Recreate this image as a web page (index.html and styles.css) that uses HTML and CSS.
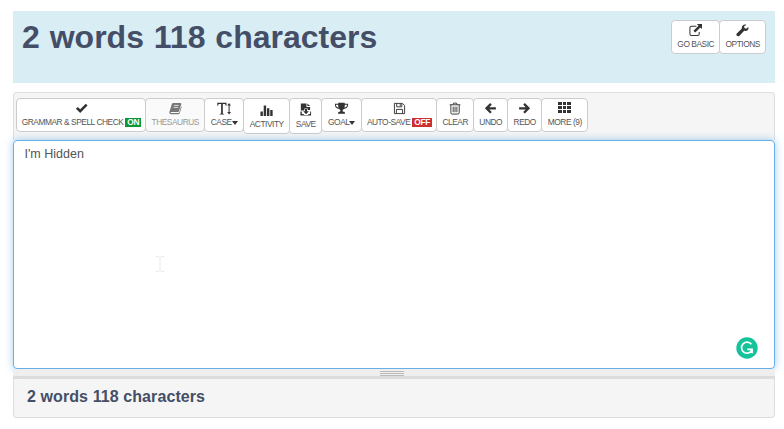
FILE: index.html
```html
<!DOCTYPE html>
<html lang="en">
<head>
<meta charset="utf-8">
<title>Word Counter</title>
<link rel="stylesheet" href="styles.css">
</head>
<body>
<header class="summary">
  <h1>2 words 118 characters</h1>
  <div class="group">
    <button class="btn basic"><svg class="icon" viewBox="0 0 14 14"><path d="M8 2.5H2.7Q1 2.5 1 4v6.7Q1 12.4 2.7 12.4h6.6Q11 12.4 11 10.7V8.5" fill="none" stroke="currentColor" stroke-width="1.1"/><path d="M8.5 0H14v5.5l-1.8-1.8L6.7 9.2 4.8 7.3l5.5-5.5z"/></svg><span>GO BASIC</span></button>
    <button class="btn options"><svg class="icon" viewBox="0 0 14 14"><path d="M13.3 3.2 10.9 5 9 4.3 8.8 2.5 11.2.8C8.5-.2 5.8 1.8 6.3 4.8L.9 10.2c-1.6 1.7.9 4.2 2.6 2.6l5.3-5.4c3.1.8 5.2-1.5 4.5-4.2z"/></svg><span>OPTIONS</span></button>
  </div>
</header>
<main class="editor">
  <div class="toolbar">
    <button class="btn grammar"><svg class="icon" viewBox="0 0 14 14"><path d="m1 7.3 2-2 2.6 2.6 6-5.9 1.9 1.9-7.9 8z"/></svg><span>GRAMMAR &amp; SPELL CHECK <b class="tag on">ON</b></span></button>
    <button class="btn thesaurus" disabled><svg class="icon" viewBox="0 0 14 14"><path d="M4.8 1h7.4q1.4 0 1 1.3l-2.5 7.6q-.3.9-1.2.9H2.4q-.8 0-.8.5t.8.5h7.8q.7 0 .9-.7l2-6.5q.7.4.4 1.3l-2 6.2q-.4 1.2-1.7 1.2H2.4C.8 13.3.1 12 .5 10.6L3 2.4Q3.4 1 4.8 1z"/><path d="M5.5 3.7h5M4.9 5.8h5" stroke="#fafafa" stroke-width=".8"/></svg><span>THESAURUS</span></button>
    <button class="btn case"><svg class="icon wide" viewBox="0 0 14 13" preserveAspectRatio="none"><path d="M.3.8h9.2v3h-.7Q8.5 1.9 7.7 1.9H5.8v9q0 1 1.3 1v.7H2.7v-.7q1.4 0 1.4-1v-9h-2Q1.2 1.9 1 3.8H.3zM11.6 3.5H10.2L12.1.9 14 3.5h-1.4V10H14l-1.9 2.6L10.2 10h1.4z"/></svg><span>CASE<i class="caret"></i></span></button>
    <button class="btn tall activity"><svg class="icon" viewBox="0 0 14 14"><path d="M.5 8h2.6v5H.5zM4 1.5h2.6V13H4zM7.5 4.5h2.6V13H7.5zM11 6.5h2.6V13H11z"/></svg><span>ACTIVITY</span></button>
    <button class="btn tall save"><svg class="icon raised" viewBox="0 0 14 14"><path d="M2 .5h6v3.7h4v3.4H9.4V6H5.8v2H2z"/><path d="M9 .5 12 3.3H9zM6.5 6.5h2.2V9h2L7.6 12 4.5 9h2zM1.5 9.2H3v2.7h1.6l1.2 1h3.6l1.2-1H12V9.2h1v4.3H1.5z"/></svg><span>SAVE</span></button>
    <button class="btn goal"><svg class="icon" viewBox="0 0 14 14"><path d="M3.5.7h7V2H14v1.5c0 2.2-1.8 3.7-4.4 4-.8.7-1.4 1.1-1.4 2 0 .8.5 1 1.2 1 1 0 1.4.7 1.4 2.1H3.2c0-1.4.5-2.1 1.5-2.1.7 0 1.1-.2 1.1-1 0-.9-.6-1.3-1.4-2C1.8 7.2 0 5.7 0 3.5V2h3.5zM1.1 3v.5c0 1.2 1 2.3 2.7 2.7Q3.4 4.8 3.4 3zm9.5 0q0 1.8-.4 3.2c1.7-.4 2.7-1.5 2.7-2.7V3z"/></svg><span>GOAL<i class="caret"></i></span></button>
    <button class="btn autosave"><svg class="icon" viewBox="0 0 14 14"><path d="M1.5 1.5h8.7l2.3 2.3v8.7h-11zM4 1.7v3.5h5.5V1.7M3.7 12.3V8h6.6v4.3M7.8 2v2.5" fill="none" stroke="currentColor"/></svg><span>AUTO-SAVE <b class="tag off">OFF</b></span></button>
    <button class="btn clear"><svg class="icon" viewBox="0 0 14 14"><path d="M.8 3h11.4M4.2 3l.7-1.8h3.2L8.8 3M2 3v8.5Q2 13 3.2 13h6.6q1.2 0 1.2-1.5V3M4.5 5v6M6.5 5v6M8.5 5v6" fill="none" stroke="currentColor"/></svg><span>CLEAR</span></button>
    <button class="btn undo"><svg class="icon" viewBox="0 0 14 14"><path d="M7.5 2 2.7 6.8l4.8 4.8M3 6.8h9.8" fill="none" stroke="currentColor" stroke-width="2.5"/></svg><span>UNDO</span></button>
    <button class="btn redo"><svg class="icon" viewBox="0 0 14 14"><path d="m6.5 2 4.8 4.8-4.8 4.8M11 6.8H1.2" fill="none" stroke="currentColor" stroke-width="2.5"/></svg><span>REDO</span></button>
    <button class="btn more"><svg class="icon" viewBox="0 0 13 13"><path d="M0 0h4v3H0zM5 0h3v3H5zM9 0h4v3H9zM0 4h4v3H0zM5 4h3v3H5zM9 4h4v3H9zM0 8h4v3H0zM5 8h3v3H5zM9 8h4v3H9z"/></svg><span>MORE (9)</span></button>
  </div>
  <div class="text" contenteditable="true" spellcheck="false">I'm Hidden</div>
  <svg class="cursor" viewBox="0 0 10 18"><path d="M1 1.5h3l1 1 1-1h3M5 2v14M1 16.5h3l1-1 1 1h3" fill="none" stroke="#eaeaea"/></svg>
  <svg class="assistant" viewBox="0 0 22 22"><circle cx="11" cy="11" r="10.7" fill="#15c39a"/><path d="M15.4 7.3A5.5 5.5 0 1 0 16 13.1M11.3 12.3h4.8v4" fill="none" stroke="#fff" stroke-width="1.7"/></svg>
  <div class="resize"><i></i></div>
</main>
<footer class="footer">2 words 118 characters</footer>
</body>
</html>
```

FILE: styles.css
```css
* { box-sizing: border-box; }
body { margin: 0; padding: 11px 9px 0 13px; background: #fff; font-family: "Liberation Sans", Arial, sans-serif; color: #333; }
.summary { display: flex; justify-content: space-between; height: 72px; padding: 9px 9px 0; background: #d9edf5; }
h1 { margin: -3px 0 0; font-size: 32px; line-height: 41px; letter-spacing: 0; word-spacing: 1px; color: #444e66; white-space: nowrap; }
.group, .toolbar { display: flex; align-items: flex-start; }
.btn { display: flex; flex: none; flex-direction: column; align-items: center; height: 34px; margin: 0 -1px 0 0; padding: 3px 0 0; border: 1px solid #ccc; border-radius: 4px; background: #fff; color: #333; font: 8.4px/11px "Liberation Sans", Arial, sans-serif; letter-spacing: -.46px; white-space: nowrap; }
.btn span { display: flex; align-items: center; margin-top: 2px; padding-left: .5px; color: #555; white-space: pre; }
.btn:disabled { background: #fafafa; color: #777; }
.btn:disabled span { color: #999; }
.icon { display: block; width: 13px; height: 13px; fill: currentColor; }
.wide { width: 14px; }
.tall { height: 36px; padding-top: 5px; }
.raised { margin: -1px 0 1px; }
.basic { width: 49px; }
.options { width: 47px; margin-right: 0; }
.grammar { width: 130px; }
.thesaurus { width: 60px; }
.case { width: 40px; }
.activity { width: 47px; }
.save { width: 33px; }
.goal { width: 41px; }
.autosave { width: 76px; }
.clear { width: 38px; }
.undo { width: 35px; }
.redo { width: 35px; }
.more { width: 47px; }
.tag { height: 9px; padding: 0 1.7px 0 2px; color: #fff; line-height: 9px; letter-spacing: -.35px; }
.on { background: #0b9837; }
.off { background: #cf2e2e; }
.caret { border: 3.5px solid transparent; border-top: 4px solid #333; border-bottom: 0; }
.editor { position: relative; margin-top: 9px; }
.toolbar { height: 48px; padding: 5px 2px 0; border: 1px solid #ddd; border-bottom: 0; border-radius: 4px 4px 0 0; background: #f5f5f5; }
.text { position: relative; height: 229px; padding: 4px 11px 4px 10.5px; border: 1px solid #66afe9; border-radius: 4px; outline: 0; background: #fff; box-shadow: 0 0 8px rgba(102,175,233,.6); color: #555; font-size: 12.5px; line-height: 18px; }
.cursor { position: absolute; left: 142px; top: 163px; width: 10px; height: 18px; }
.assistant { position: absolute; right: 17px; top: 245px; width: 22px; height: 22px; }
.resize { position: relative; display: flex; justify-content: center; height: 7px; padding-top: 2px; background: #eee; }
.resize i { width: 24px; height: 5px; margin-right: 4px; background: repeating-linear-gradient(#bbb 0 1px, #eee 1px 2px); }
.footer { height: 42px; padding: 8px 13px; border: 1px solid #ddd; border-top: 3px solid #ddd; border-radius: 0 0 4px 4px; background: #f5f5f5; color: #444e66; font-size: 16px; font-weight: bold; line-height: 20px; letter-spacing: .09px; }
```
